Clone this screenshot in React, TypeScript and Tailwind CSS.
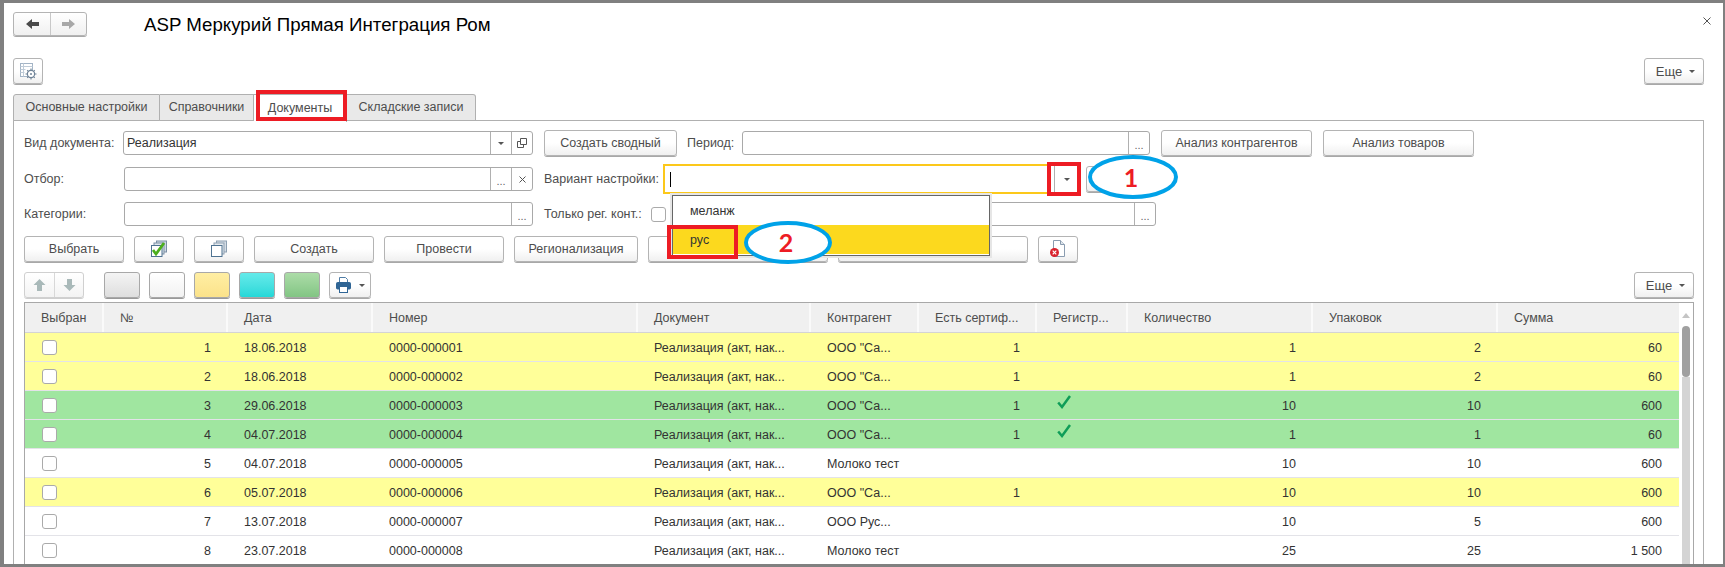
import type {ReactNode} from 'react';

const Caret = () => (
  <svg width="6" height="3" viewBox="0 0 6 3" className="shrink-0">
    <path d="M0 0h6L3 3z" fill="#555" />
  </svg>
);

function Btn({className = '', children}: {className?: string; children?: ReactNode}) {
  return (
    <div
      className={`h-[26px] shrink-0 flex items-center justify-center rounded-[3px] border border-[#b4b4b4] bg-linear-to-b from-white via-white to-[#f0f0f0] shadow-[0_1px_0_#a8a8a8] text-[#4d4d4d] ${className}`}
    >
      {children}
    </div>
  );
}

function Segment({className = '', children}: {className?: string; children?: ReactNode}) {
  return (
    <div className={`shrink-0 flex items-center justify-center border-l border-[#b0b0b0] text-[#666] ${className}`}>
      {children}
    </div>
  );
}

const Dots = () => <span className="text-[11px] mt-[4px]">...</span>;

function Field({className = '', text, children}: {className?: string; text?: string; children?: ReactNode}) {
  return (
    <div className={`h-[24px] shrink-0 flex rounded-[3px] border border-[#a9a9a9] bg-white ${className}`}>
      <div className="flex-1 pl-[3px] pt-[1px] flex items-center text-[#333]">{text}</div>
      {children}
    </div>
  );
}

function Label({className = '', children}: {className?: string; children: ReactNode}) {
  return <div className={`shrink-0 pt-[1px] ${className}`}>{children}</div>;
}

function Swatch({className = ''}: {className?: string}) {
  return <div className={`h-[26px] w-[36px] shrink-0 rounded-[3px] border border-[#a8a8a8] shadow-[0_1px_0_#999] ${className}`} />;
}

function Tab({className = '', label}: {className?: string; label: string}) {
  return (
    <div className={`h-[27px] shrink-0 flex items-center justify-center border border-[#b0b0b0] border-l-0 first:border-l bg-[#e9e9e9] text-[#4d4d4d] first:rounded-tl-[3px] last:rounded-tr-[3px] ${className}`}>
      {label}
    </div>
  );
}

function Callout({className = '', label}: {className?: string; label: string}) {
  return (
    <div className={`absolute z-20 flex items-center justify-center pr-[4px] ${className}`}>
      <svg className="absolute inset-0 w-full h-full" viewBox="0 0 90 44" preserveAspectRatio="none">
        <ellipse cx="45" cy="22" rx="43" ry="20" fill="#fff" stroke="#00a2e8" strokeWidth="4" />
      </svg>
      <span className="relative font-['Lato',sans-serif] font-bold text-[25px] leading-none text-[#ed1c24]">{label}</span>
    </div>
  );
}

const CheckDocs = () => (
  <svg width="18" height="18" viewBox="0 0 18 18">
    <rect x="6.5" y="1" width="10" height="11" fill="#cfd9e3" stroke="#7a8fa5" />
    <rect x="4" y="3" width="10" height="11" fill="#dfe6ec" stroke="#7a8fa5" />
    <rect x="1.5" y="5.5" width="10.5" height="11" fill="#fff" stroke="#4f7391" />
    <path d="M3 10l3 4 8-11" fill="none" stroke="#4cae1c" strokeWidth="2.8" />
  </svg>
);

const CopyDocs = () => (
  <svg width="18" height="18" viewBox="0 0 18 18">
    <rect x="6.5" y="1" width="10" height="11" fill="#d5dde5" stroke="#8da0b2" />
    <rect x="4" y="3" width="10" height="11" fill="#e5eaef" stroke="#8da0b2" />
    <rect x="1.5" y="5.5" width="10.5" height="11" fill="#fff" stroke="#4f7391" />
  </svg>
);

const DocDelete = () => (
  <svg width="18" height="18" viewBox="0 0 18 18">
    <path d="M4.5 .5h7l4 4v12h-11z" fill="#fff" stroke="#8a9cb0" />
    <path d="M11.5 .5v4h4" fill="#dfe6ec" stroke="#8a9cb0" />
    <circle cx="5.5" cy="12.5" r="4.5" fill="#d9232e" />
    <path d="M3.7 10.7l3.6 3.6M7.3 10.7l-3.6 3.6" stroke="#fff" strokeWidth="1.2" />
  </svg>
);

const FormSettings = () => (
  <svg width="17" height="17" viewBox="0 0 17 17">
    <rect x=".5" y=".5" width="12" height="13" fill="#fff" stroke="#a3b4c6" />
    <path d="M.5 3.5h12M3.5 .5v13M.5 6.5h5M.5 9.5h4" stroke="#c0ccd8" />
    <circle cx="11" cy="11" r="3.6" fill="#fff" stroke="#6f8397" strokeWidth="1.2" />
    <circle cx="11" cy="11" r="1" fill="#6f8397" />
    <path d="M11 5.5v1.8M11 14.7v1.8M5.5 11h1.8M14.7 11h1.8M7.2 7.2l1.2 1.2M13.6 13.6l1.2 1.2M14.8 7.2l-1.2 1.2M8.4 13.6l-1.2 1.2" stroke="#6f8397" strokeWidth="1.1" />
  </svg>
);

const Printer = () => (
  <svg width="15" height="16" viewBox="0 0 15 16">
    <path d="M3.5 6V.5h6l2 2V6" fill="#fff" stroke="#4f7da6" />
    <rect x=".5" y="5.5" width="14" height="6.5" rx="1" fill="#2f6595" stroke="#2f6595" />
    <rect x="3.5" y="9.5" width="8" height="6" fill="#fff" stroke="#2f6595" />
  </svg>
);

const Arrow = ({dir, color}: {dir: 'left' | 'right' | 'up' | 'down'; color: string}) => {
  const d = {
    left: 'M0 6l6-5v3h7v4H6v3z',
    right: 'M13 6L7 1v3H0v4h7v3z',
    up: 'M6.5 0l6 6h-3.5v6H4V6H.5z',
    down: 'M6.5 12l6-6h-3.5V0H4v6H.5z',
  }[dir];
  return (
    <svg width="13" height="12" viewBox="0 0 13 12">
      <path d={d} fill={color} />
    </svg>
  );
};

const columns = ['Выбран', '№', 'Дата', 'Номер', 'Документ', 'Контрагент', 'Есть сертиф...', 'Регистр...', 'Количество', 'Упаковок', 'Сумма'];

const YELLOW = 'bg-[#ffff99]';
const GREEN = 'bg-[#a0e6a0]';
const WHITE = 'bg-white';

const rows = [
  {n: 1, date: '18.06.2018', num: '0000-000001', agent: 'ООО "Са...', cert: '1', ok: false, qty: '1', pack: '2', sum: '60', bg: YELLOW},
  {n: 2, date: '18.06.2018', num: '0000-000002', agent: 'ООО "Са...', cert: '1', ok: false, qty: '1', pack: '2', sum: '60', bg: YELLOW},
  {n: 3, date: '29.06.2018', num: '0000-000003', agent: 'ООО "Са...', cert: '1', ok: true, qty: '10', pack: '10', sum: '600', bg: GREEN},
  {n: 4, date: '04.07.2018', num: '0000-000004', agent: 'ООО "Са...', cert: '1', ok: true, qty: '1', pack: '1', sum: '60', bg: GREEN},
  {n: 5, date: '04.07.2018', num: '0000-000005', agent: 'Молоко тест', cert: '', ok: false, qty: '10', pack: '10', sum: '600', bg: WHITE},
  {n: 6, date: '05.07.2018', num: '0000-000006', agent: 'ООО "Са...', cert: '1', ok: false, qty: '10', pack: '10', sum: '600', bg: YELLOW},
  {n: 7, date: '13.07.2018', num: '0000-000007', agent: 'ООО Рус...', cert: '', ok: false, qty: '10', pack: '5', sum: '600', bg: WHITE},
  {n: 8, date: '23.07.2018', num: '0000-000008', agent: 'Молоко тест', cert: '', ok: false, qty: '25', pack: '25', sum: '1 500', bg: WHITE},
];

const gridCols = 'grid grid-cols-[79px_124px_145px_265px_173px_108px_118px_91px_185px_185px_181px]';
const leftCell = 'pl-[16px] pt-[2px] flex items-center';
const rightCell = 'pr-[17px] pt-[2px] flex items-center justify-end';

export default function App() {
  return (
    <div className="relative w-[1725px] h-[567px] overflow-hidden bg-white font-['Liberation_Sans',Arial,sans-serif] text-[12.5px]">
      <div className="h-full overflow-hidden border-[#808080] border-t-[3px] border-l-[4px] border-r-[2px] border-b-[3px] pl-[9px] pr-[19px]">
        {/* title row */}
        <div className="mt-[9px] h-[24px] flex items-center">
          <div className="w-[74px] h-[24px] flex rounded-[3px] border border-[#b4b4b4] bg-linear-to-b from-white to-[#f0f0f0] shadow-[0_1px_0_#a8a8a8]">
            <div className="w-[37px] flex items-center justify-center border-r border-[#c8c8c8]">
              <Arrow dir="left" color="#4a4a4a" />
            </div>
            <div className="flex-1 flex items-center justify-center">
              <Arrow dir="right" color="#a8a8a8" />
            </div>
          </div>
          <div className="ml-[57px] pt-[2px] text-[18.7px] text-black">ASP Меркурий Прямая Интеграция Ром</div>
          <svg className="ml-auto -mr-[7px] mb-[6px]" width="8" height="8" viewBox="0 0 8 8">
            <path d="M.5 .5l7 7M7.5 .5l-7 7" stroke="#555" strokeWidth="1" />
          </svg>
        </div>

        {/* form commands */}
        <div className="mt-[22px] flex justify-between">
          <Btn className="w-[30px]">
            <FormSettings />
          </Btn>
          <Btn className="w-[60px] gap-[7px] text-[13px] pl-[3px] pt-[1px]">
            Еще
            <Caret />
          </Btn>
        </div>

        {/* tabs */}
        <div className="mt-[10px] flex relative z-10 h-[27px]">
          <Tab className="w-[147px]" label="Основные настройки" />
          <Tab className="w-[94px]" label="Справочники" />
          <Tab className="w-[93px] !bg-white h-[28px] border-b-0" label="Документы" />
          <Tab className="w-[129px]" label="Складские записи" />
        </div>

        {/* tab panel */}
        <div className="-mt-px border border-[#b0b0b0] pt-[9px] pl-[10px] pb-[40px] text-[#4d4d4d]">
          <div className="h-[26px] flex items-center">
            <Label className="w-[99px]">Вид документа:</Label>
            <Field className="w-[410px]" text="Реализация">
              <Segment className="w-[21px]">
                <Caret />
              </Segment>
              <Segment className="w-[21px]">
                <svg width="10" height="10" viewBox="0 0 10 10">
                  <path d="M3.5 .5h6v6h-6zM3.5 3.5H.5v6h6v-3" fill="none" stroke="#555" />
                </svg>
              </Segment>
            </Field>
            <Btn className="w-[133px] ml-[11px] pt-[1px]">Создать сводный</Btn>
            <Label className="w-[55px] ml-[10px]">Период:</Label>
            <Field className="w-[408px]">
              <Segment className="w-[21px]">
                <Dots />
              </Segment>
            </Field>
            <Btn className="w-[151px] ml-[11px] pt-[1px]">Анализ контрагентов</Btn>
            <Btn className="w-[151px] ml-[11px] pt-[1px]">Анализ товаров</Btn>
          </div>

          <div className="mt-[10px] h-[26px] flex items-center">
            <Label className="w-[100px]">Отбор:</Label>
            <Field className="w-[409px]">
              <Segment className="w-[21px]">
                <Dots />
              </Segment>
              <Segment className="w-[21px]">
                <svg width="7" height="7" viewBox="0 0 7 7">
                  <path d="M.5 .5l6 6M6.5 .5l-6 6" stroke="#555" />
                </svg>
              </Segment>
            </Field>
            <Label className="w-[119px] ml-[11px]">Вариант настройки:</Label>
            <div className="w-[417px] h-[30px] shrink-0 flex border-2 border-[#fcc81a] bg-white">
              <div className="flex-1 pl-[5px] flex items-center">
                <div className="w-px h-[15px] bg-black" />
              </div>
              <Segment className="w-[24px]">
                <Caret />
              </Segment>
            </div>
            <Btn className="w-[28px] ml-[6px]" />
          </div>

          <div className="mt-[10px] h-[24px] flex items-center">
            <Label className="w-[100px]">Категории:</Label>
            <Field className="w-[409px]">
              <Segment className="w-[21px]">
                <Dots />
              </Segment>
            </Field>
            <Label className="w-[107px] ml-[11px]">Только рег. конт.:</Label>
            <div className="w-[15px] h-[15px] shrink-0 rounded-[3px] border border-[#aaa] bg-white" />
            <Field className="w-[484px] ml-[6px]">
              <Segment className="w-[21px]">
                <Dots />
              </Segment>
            </Field>
          </div>

          <div className="mt-[10px] flex gap-[10px]">
            <Btn className="w-[100px] pt-[1px]">Выбрать</Btn>
            <Btn className="w-[50px]">
              <CheckDocs />
            </Btn>
            <Btn className="w-[50px]">
              <CopyDocs />
            </Btn>
            <Btn className="w-[120px] pt-[1px]">Создать</Btn>
            <Btn className="w-[120px] pt-[1px]">Провести</Btn>
            <Btn className="w-[124px] pt-[1px]">Регионализация</Btn>
            <Btn className="w-[180px]" />
            <Btn className="w-[190px]" />
            <Btn className="w-[40px]">
              <DocDelete />
            </Btn>
          </div>

          <div className="mt-[10px] w-[1670px] flex items-center">
            <div className="w-[60px] h-[26px] flex rounded-[3px] border border-[#d0d0d0] bg-linear-to-b from-white to-[#f3f3f3] shadow-[0_1px_0_#cfcfcf]">
              <div className="w-[30px] flex items-center justify-center border-r border-[#d8d8d8]">
                <Arrow dir="up" color="#a9b9b9" />
              </div>
              <div className="flex-1 flex items-center justify-center">
                <Arrow dir="down" color="#a9b9b9" />
              </div>
            </div>
            <div className="ml-[20px] flex gap-[9px]">
              <Swatch className="bg-linear-to-b from-[#f4f4f4] to-[#dedede]" />
              <Swatch className="bg-linear-to-b from-white to-[#f2f2f2]" />
              <Swatch className="bg-linear-to-b from-[#ffeea3] to-[#fbe28a]" />
              <Swatch className="bg-linear-to-b from-[#63eaea] to-[#22d8d8]" />
              <Swatch className="bg-linear-to-b from-[#acdca8] to-[#82c584]" />
              <Btn className="w-[42px] gap-[8px]">
                <Printer />
                <Caret />
              </Btn>
            </div>
            <Btn className="w-[60px] ml-auto gap-[7px] text-[13px] pl-[3px] pt-[1px]">
              Еще
              <Caret />
            </Btn>
          </div>

          {/* documents list */}
          <div className="mt-[4px] w-[1670px] flex border border-[#a8a8a8]">
            <div>
              <div className={`${gridCols} h-[30px] bg-[#f0f0f0] border-b border-[#d4d4d4]`}>
                {columns.map((title) => (
                  <div key={title} className="pl-[16px] pt-[1px] flex items-center border-r-2 border-[#fafafa] last:border-r-0 text-[#4d4d4d]">
                    {title}
                  </div>
                ))}
              </div>
              {rows.map((row) => (
                <div key={row.n} className={`${gridCols} h-[29px] border-b border-[#e3e3e8] text-[#333] ${row.bg}`}>
                  <div className="pl-[17px] flex items-center">
                    <div className="w-[15px] h-[15px] rounded-[3px] border border-[#aaa] bg-white" />
                  </div>
                  <div className={rightCell}>{row.n}</div>
                  <div className={leftCell}>{row.date}</div>
                  <div className={leftCell}>{row.num}</div>
                  <div className={leftCell}>Реализация (акт, нак...</div>
                  <div className={leftCell}>{row.agent}</div>
                  <div className={rightCell}>{row.cert}</div>
                  <div className="pl-[20px] pb-[6px] flex items-center">
                    {row.ok && (
                      <svg width="14" height="14" viewBox="0 0 14 14">
                        <path d="M1.2 7.5l3.8 4.5L13 1" fill="none" stroke="#0f9d58" strokeWidth="2.5" />
                      </svg>
                    )}
                  </div>
                  <div className={rightCell}>{row.qty}</div>
                  <div className={rightCell}>{row.pack}</div>
                  <div className={rightCell}>{row.sum}</div>
                </div>
              ))}
            </div>
            <div className="w-[14px] pl-[3px] pr-[3px] flex flex-col">
              <div className="h-[23px] shrink-0 flex items-center justify-center pt-[1px]">
                <svg width="8" height="5" viewBox="0 0 8 5">
                  <path d="M4 0l4 5H0z" fill="#c4c4c4" />
                </svg>
              </div>
              <div className="h-[51px] shrink-0 rounded-t-full rounded-b-full bg-[#a0a0a0]" />
              <div className="flex-1 bg-[#d4d4d4]" />
            </div>
          </div>
        </div>
      </div>

      {/* settings variant dropdown */}
      <div className="absolute left-[670px] top-[193px] w-[322px] h-[65px] bg-[#e6e6e6] p-[2px]">
        <div className="h-full border border-[#666] bg-white text-[#333]">
          <div className="h-[29px] pl-[17px] pt-[1px] flex items-center">меланж</div>
          <div className="h-[29px] pl-[17px] pt-[1px] flex items-center bg-[#fcd91e]">рус</div>
        </div>
      </div>

      {/* annotations */}
      <div className="absolute z-20 left-[256px] top-[90px] w-[91px] h-[31px] border-4 border-[#ed1c24]" />
      <div className="absolute z-20 left-[1047px] top-[162px] w-[34px] h-[34px] border-4 border-[#ed1c24]" />
      <div className="absolute z-20 left-[667px] top-[225px] w-[71px] h-[34px] border-4 border-[#ed1c24]" />
      <Callout className="left-[1088px] top-[155px] w-[90px] h-[44px]" label="1" />
      <Callout className="left-[744px] top-[221px] w-[88px] h-[43px]" label="2" />
    </div>
  );
}
